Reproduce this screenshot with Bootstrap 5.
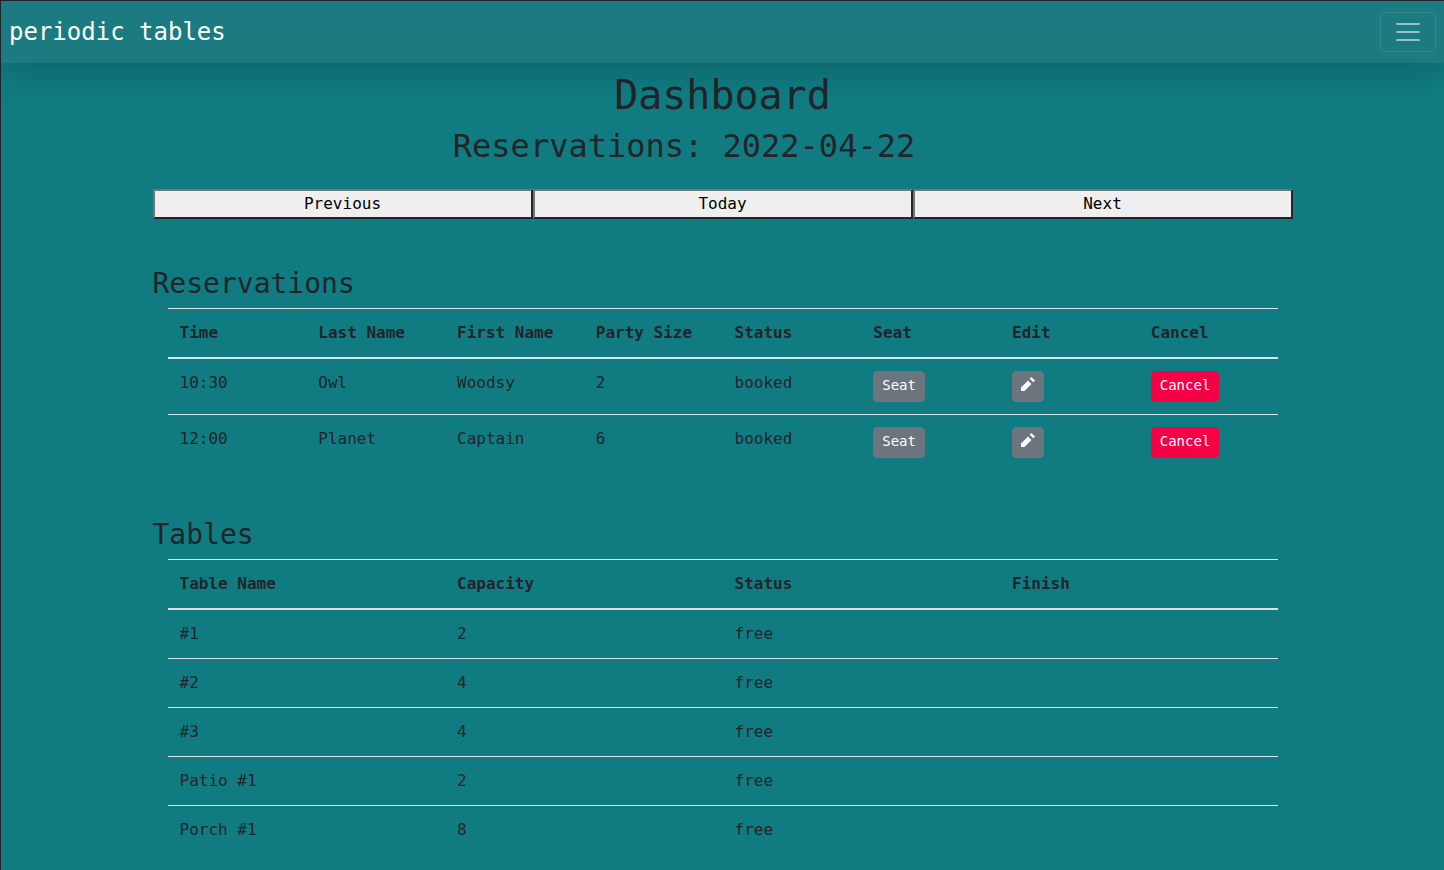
<!DOCTYPE html>
<html lang="en">
<head>
    <meta charset="UTF-8" />
    <meta name="viewport" content="width=device-width, initial-scale=1" />
    <title>periodic tables - Dashboard</title>
    <link href="https://cdn.jsdelivr.net/npm/bootstrap@5.3.2/dist/css/bootstrap.min.css" rel="stylesheet" />
    <style>
        body {
            font-family: "DejaVu Sans Mono", monospace;
            background-color: #107c82;
            color: #212529;
            min-height: 100vh;
        }
        .top-bar {
            background-color: #1b7b81;
            box-shadow: 0 8px 36px rgba(0,0,0,0.2);
        }
        .top-bar .navbar-brand {
            font-size: 24px;
        }
        .page-wrap {
            max-width: 1140px;
        }
        .page-title {
            font-size: 40px;
            margin-top: 8px;
        }
        .date-title {
            font-size: 32px;
            padding-right: 77px;
            margin-bottom: 24px;
        }
        .date-nav button {
            width: 380px;
            color: #000;
            background-color: #efefef;
            border: 2px solid;
            border-color: #767676 #212529 #212529 #767676;
        }
        .section-title {
            font-size: 28px;
            margin-bottom: 7px;
        }
        .table-wrap {
            padding: 0 15px;
        }
        .res-table {
            --bs-table-bg: transparent;
            --bs-table-color: #212529;
            table-layout: fixed;
            margin-bottom: 48px;
        }
        .res-table > :not(caption) > * > * {
            padding: 12px;
            border-bottom: 0;
            border-top: 1px solid #dee2e6;
        }
        .res-table > thead > tr > th {
            border-bottom: 2px solid #dee2e6;
        }
        .res-table > tbody > tr:first-child > td {
            border-top: 0;
        }
        .res-table .btn-sm {
            padding-top: 3px;
            padding-bottom: 5px;
        }
        .btn-cancel {
            --bs-btn-bg: #f50045;
            --bs-btn-border-color: #f50045;
            --bs-btn-color: #fff;
            --bs-btn-hover-bg: #d6003c;
            --bs-btn-hover-border-color: #d6003c;
            --bs-btn-hover-color: #fff;
        }
        .pencil-icon {
            width: 14px;
            height: 14px;
            fill: currentColor;
            vertical-align: -1px;
        }
    </style>
</head>
<body class="border-top border-start border-dark">
<nav class="navbar navbar-dark top-bar px-2">
    <a class="navbar-brand" href="#">periodic tables</a>
    <button class="navbar-toggler" type="button" aria-label="Toggle navigation">
        <span class="navbar-toggler-icon"></span>
    </button>
</nav>

<main class="container-fluid page-wrap px-0">
    <h1 class="page-title text-center">Dashboard</h1>
    <h2 class="date-title text-center">Reservations: 2022-04-22</h2>

    <div class="date-nav d-flex mb-5">
        <button type="button">Previous</button>
        <button type="button">Today</button>
        <button type="button">Next</button>
    </div>

    <h3 class="section-title">Reservations</h3>
    <div class="table-wrap">
        <table class="table res-table">
            <thead>
                <tr>
                    <th>Time</th>
                    <th>Last Name</th>
                    <th>First Name</th>
                    <th>Party Size</th>
                    <th>Status</th>
                    <th>Seat</th>
                    <th>Edit</th>
                    <th>Cancel</th>
                </tr>
            </thead>
            <tbody>
                <tr>
                    <td>10:30</td>
                    <td>Owl</td>
                    <td>Woodsy</td>
                    <td>2</td>
                    <td>booked</td>
                    <td><a class="btn btn-secondary btn-sm" href="#">Seat</a></td>
                    <td><a class="btn btn-secondary btn-sm" href="#" aria-label="Edit"><svg class="pencil-icon" viewBox="0 0 8 8"><path d="M6 0l-1 1 2 2 1-1-2-2zm-2 2l-4 4v2h2l4-4-2-2z"/></svg></a></td>
                    <td><button class="btn btn-cancel btn-sm" type="button">Cancel</button></td>
                </tr>
                <tr>
                    <td>12:00</td>
                    <td>Planet</td>
                    <td>Captain</td>
                    <td>6</td>
                    <td>booked</td>
                    <td><a class="btn btn-secondary btn-sm" href="#">Seat</a></td>
                    <td><a class="btn btn-secondary btn-sm" href="#" aria-label="Edit"><svg class="pencil-icon" viewBox="0 0 8 8"><path d="M6 0l-1 1 2 2 1-1-2-2zm-2 2l-4 4v2h2l4-4-2-2z"/></svg></a></td>
                    <td><button class="btn btn-cancel btn-sm" type="button">Cancel</button></td>
                </tr>
            </tbody>
        </table>
    </div>

    <h3 class="section-title">Tables</h3>
    <div class="table-wrap">
        <table class="table res-table mb-0">
            <thead>
                <tr>
                    <th>Table Name</th>
                    <th>Capacity</th>
                    <th>Status</th>
                    <th>Finish</th>
                </tr>
            </thead>
            <tbody>
                <tr><td>#1</td><td>2</td><td>free</td><td></td></tr>
                <tr><td>#2</td><td>4</td><td>free</td><td></td></tr>
                <tr><td>#3</td><td>4</td><td>free</td><td></td></tr>
                <tr><td>Patio #1</td><td>2</td><td>free</td><td></td></tr>
                <tr><td>Porch #1</td><td>8</td><td>free</td><td></td></tr>
            </tbody>
        </table>
    </div>
</main>
<script src="https://cdn.jsdelivr.net/npm/bootstrap@5.3.2/dist/js/bootstrap.bundle.min.js"></script>
</body>
</html>
